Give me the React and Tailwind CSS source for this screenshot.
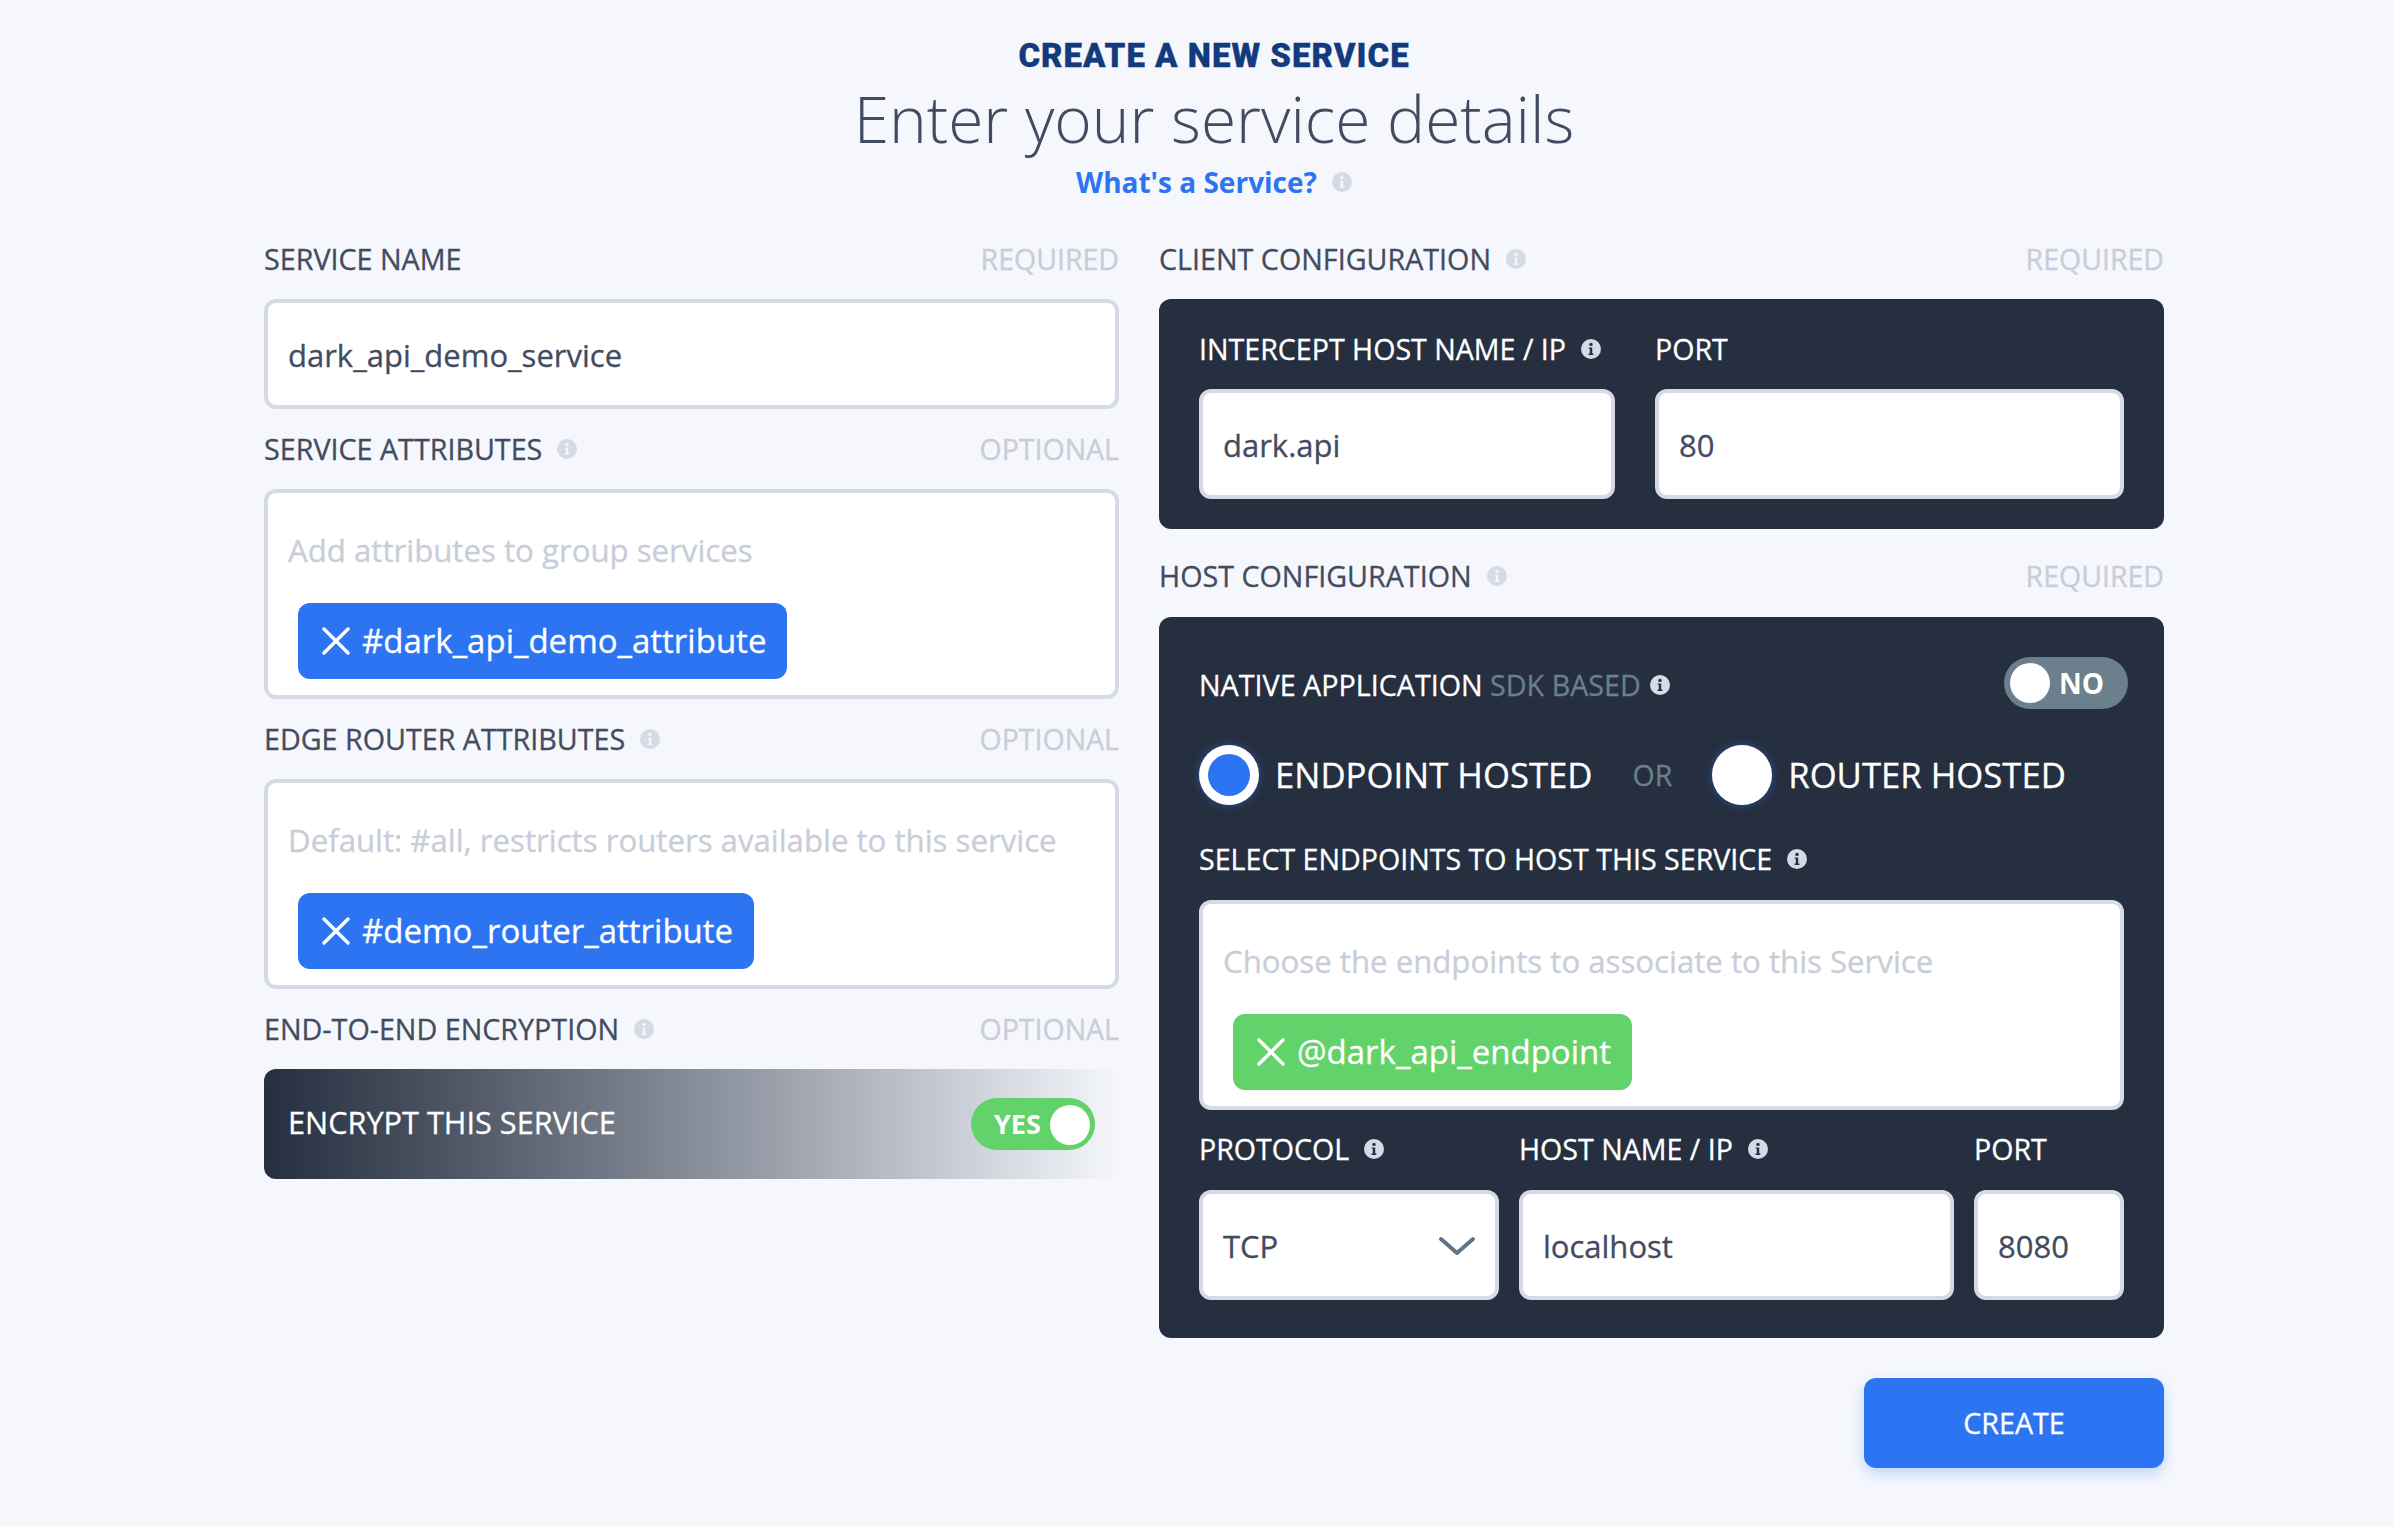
const Info = ({ dark }) => (
  <svg width="20" height="20" viewBox="0 0 20 20" className="shrink-0">
    <circle cx="10" cy="10" r="10" fill="#d5dae4" />
    <circle cx="10" cy="5.4" r="1.7" fill={dark ? "#262f3f" : "#f5f7fc"} />
    <path d="M7.8 8.4h3.4v6.2h1.2v1.4H7.6v-1.4h1.2V9.8h-1z" fill={dark ? "#262f3f" : "#f5f7fc"} />
  </svg>
);

const XIcon = () => (
  <svg width="28" height="28" viewBox="0 0 28 28" className="shrink-0" fill="none" stroke="white" strokeWidth="3.4" strokeLinecap="round">
    <path d="M2 2l24 24M26 2L2 26" />
  </svg>
);

const Label = ({ text, info, note, className = "h-20" }) => (
  <div className={`flex items-center justify-between text-[28.7px] leading-10 ${className}`}>
    <div className="flex items-center gap-[15px] text-[#424b5f]">
      <span>{text}</span>
      {info && <Info />}
    </div>
    <span className="text-[28.5px] text-[#c8cdd9]">{note}</span>
  </div>
);

const Field = ({ value, className = "" }) => (
  <div className={`flex h-[110px] items-center rounded-[12px] border-4 border-[#d5dae4] bg-white pl-5 pt-[2px] text-[31px] leading-10 text-[#424b5f] ${className}`}>
    {value}
  </div>
);

const Chip = ({ text, color }) => (
  <div className={`ml-[10px] flex h-[76px] w-fit items-center gap-[12px] rounded-[12px] pl-6 pr-[21px] text-[33px] leading-10 text-white ${color}`}>
    <XIcon />
    <span>{text}</span>
  </div>
);

const TagBox = ({ placeholder, chip, color = "bg-[#2d74f3]" }) => (
  <div className="h-[210px] rounded-[12px] border-4 border-[#d5dae4] bg-white pl-5 pt-[37px] text-[31.2px] leading-10">
    <div className="mb-[33px] text-[#c8cdd9]">{placeholder}</div>
    <Chip text={chip} color={color} />
  </div>
);

const Sub = ({ children, info, className = "h-20 pb-[2px]" }) => (
  <div className={`flex items-center gap-[15px] text-[28.6px] leading-10 text-white ${className}`}>
    <span>{children}</span>
    {info && <Info dark />}
  </div>
);

const Radio = ({ on, children }) => (
  <div className="flex items-center gap-4">
    <div className="flex h-[60px] w-[60px] items-center justify-center rounded-full bg-white shadow-[0_0_8px_rgba(45,116,243,0.5)]">
      {on && <div className="h-[42px] w-[42px] rounded-full bg-[#2d74f3]" />}
    </div>
    <span className="text-[34.7px] leading-[48px] text-white">{children}</span>
  </div>
);

export default function App() {
  return (
    <div className="h-[1526px] overflow-hidden bg-[#f5f7fc] pl-[264px] pr-[230px] font-['Open_Sans','Noto_Sans',sans-serif] [-webkit-text-stroke:0.3px]">
      <header className="flex h-[219px] flex-col items-center">
        <h1 className="mt-[34px] font-['Roboto',sans-serif] text-[33px] font-black leading-[44px] tracking-[1px] text-[#133a7c]">CREATE A NEW SERVICE</h1>
        <h2 className="mt-[1px] text-[64px] font-light leading-[80px] text-[#424b5f] [-webkit-text-stroke:0px]">Enter your service details</h2>
        <div className="mt-[3px] flex items-center gap-[15px]">
          <span className="text-[28px] font-bold leading-10 text-[#2d74f3] [-webkit-text-stroke:0px]">What's a Service?</span>
          <Info />
        </div>
      </header>
      <main className="grid grid-cols-[855px_1005px] gap-x-10">
        <section>
          <Label text="SERVICE NAME" note="REQUIRED" />
          <Field value="dark_api_demo_service" />
          <Label text="SERVICE ATTRIBUTES" info note="OPTIONAL" />
          <TagBox placeholder="Add attributes to group services" chip="#dark_api_demo_attribute" />
          <Label text="EDGE ROUTER ATTRIBUTES" info note="OPTIONAL" />
          <TagBox placeholder="Default: #all, restricts routers available to this service" chip="#demo_router_attribute" />
          <Label text="END-TO-END ENCRYPTION" info note="OPTIONAL" />
          <div className="flex h-[110px] items-center justify-between rounded-[12px] bg-gradient-to-r from-[#262f3f] to-[#f5f7fc] pl-6 pr-6">
            <span className="pb-[5px] text-[30.7px] leading-10 text-white">ENCRYPT THIS SERVICE</span>
            <div className="flex h-[52px] w-[124px] items-center justify-between rounded-full bg-[#62d36a] pl-[23px] pr-[5px] pt-px">
              <span className="text-[27px] font-bold text-white [-webkit-text-stroke:0px]">YES</span>
              <div className="h-10 w-10 rounded-full bg-white" />
            </div>
          </div>
        </section>
        <section>
          <Label text="CLIENT CONFIGURATION" info note="REQUIRED" />
          <div className="h-[230px] rounded-[12px] bg-[#262f3f] px-10">
            <div className="grid grid-cols-[416px_1fr] gap-x-10">
              <div>
                <Sub info className="h-[90px] pt-[10px]">INTERCEPT HOST NAME / IP</Sub>
                <Field value="dark.api" />
              </div>
              <div>
                <Sub className="h-[90px] pt-[10px]">PORT</Sub>
                <Field value="80" />
              </div>
            </div>
          </div>
          <Label text="HOST CONFIGURATION" info note="REQUIRED" className="h-[88px] pt-[6px]" />
          <div className="h-[721px] rounded-[12px] bg-[#262f3f] px-10 pt-10">
            <div className="flex h-[52px] items-center justify-between">
              <div className="flex items-center gap-[9px] pt-1 text-[28.7px] leading-10 text-white">
                <span>NATIVE APPLICATION <span className="text-[#6b7f8d]">SDK BASED</span></span>
                <Info dark />
              </div>
              <div className="-mr-1 flex h-[52px] w-[124px] items-center gap-[9px] rounded-full bg-[#6b7f8d] pl-[6px]">
                <div className="h-10 w-10 rounded-full bg-white" />
                <span className="text-[28px] font-bold text-white [-webkit-text-stroke:0px]">NO</span>
              </div>
            </div>
            <div className="mt-9 flex h-[60px] items-center">
              <Radio on>ENDPOINT HOSTED</Radio>
              <span className="mx-10 text-[28.5px] text-[#6b7f8d]">OR</span>
              <Radio>ROUTER HOSTED</Radio>
            </div>
            <Sub info className="h-[95px] pt-3">SELECT ENDPOINTS TO HOST THIS SERVICE</Sub>
            <TagBox placeholder="Choose the endpoints to associate to this Service" chip="@dark_api_endpoint" color="bg-[#62d36a]" />
            <div className="grid grid-cols-[300px_435px_1fr] gap-x-5">
              <div>
                <Sub info>PROTOCOL</Sub>
                <div className="flex h-[110px] items-center justify-between rounded-[12px] border-4 border-[#d5dae4] bg-white pl-5 pr-[20px] pt-[2px] text-[31px] leading-10 text-[#424b5f]">
                  <span>TCP</span>
                  <svg width="36" height="20" viewBox="0 0 36 20" fill="none" stroke="#607486" strokeWidth="4" strokeLinecap="round" strokeLinejoin="round">
                    <path d="M2 3l16 14L34 3" />
                  </svg>
                </div>
              </div>
              <div>
                <Sub info>HOST NAME / IP</Sub>
                <Field value="localhost" />
              </div>
              <div>
                <Sub>PORT</Sub>
                <Field value="8080" />
              </div>
            </div>
          </div>
          <div className="mt-10 flex justify-end">
            <button className="h-[90px] w-[300px] rounded-[12px] bg-[#2d74f3] text-[28.7px] text-white shadow-[0_6px_14px_rgba(45,116,243,0.25)]">CREATE</button>
          </div>
        </section>
      </main>
    </div>
  );
}
